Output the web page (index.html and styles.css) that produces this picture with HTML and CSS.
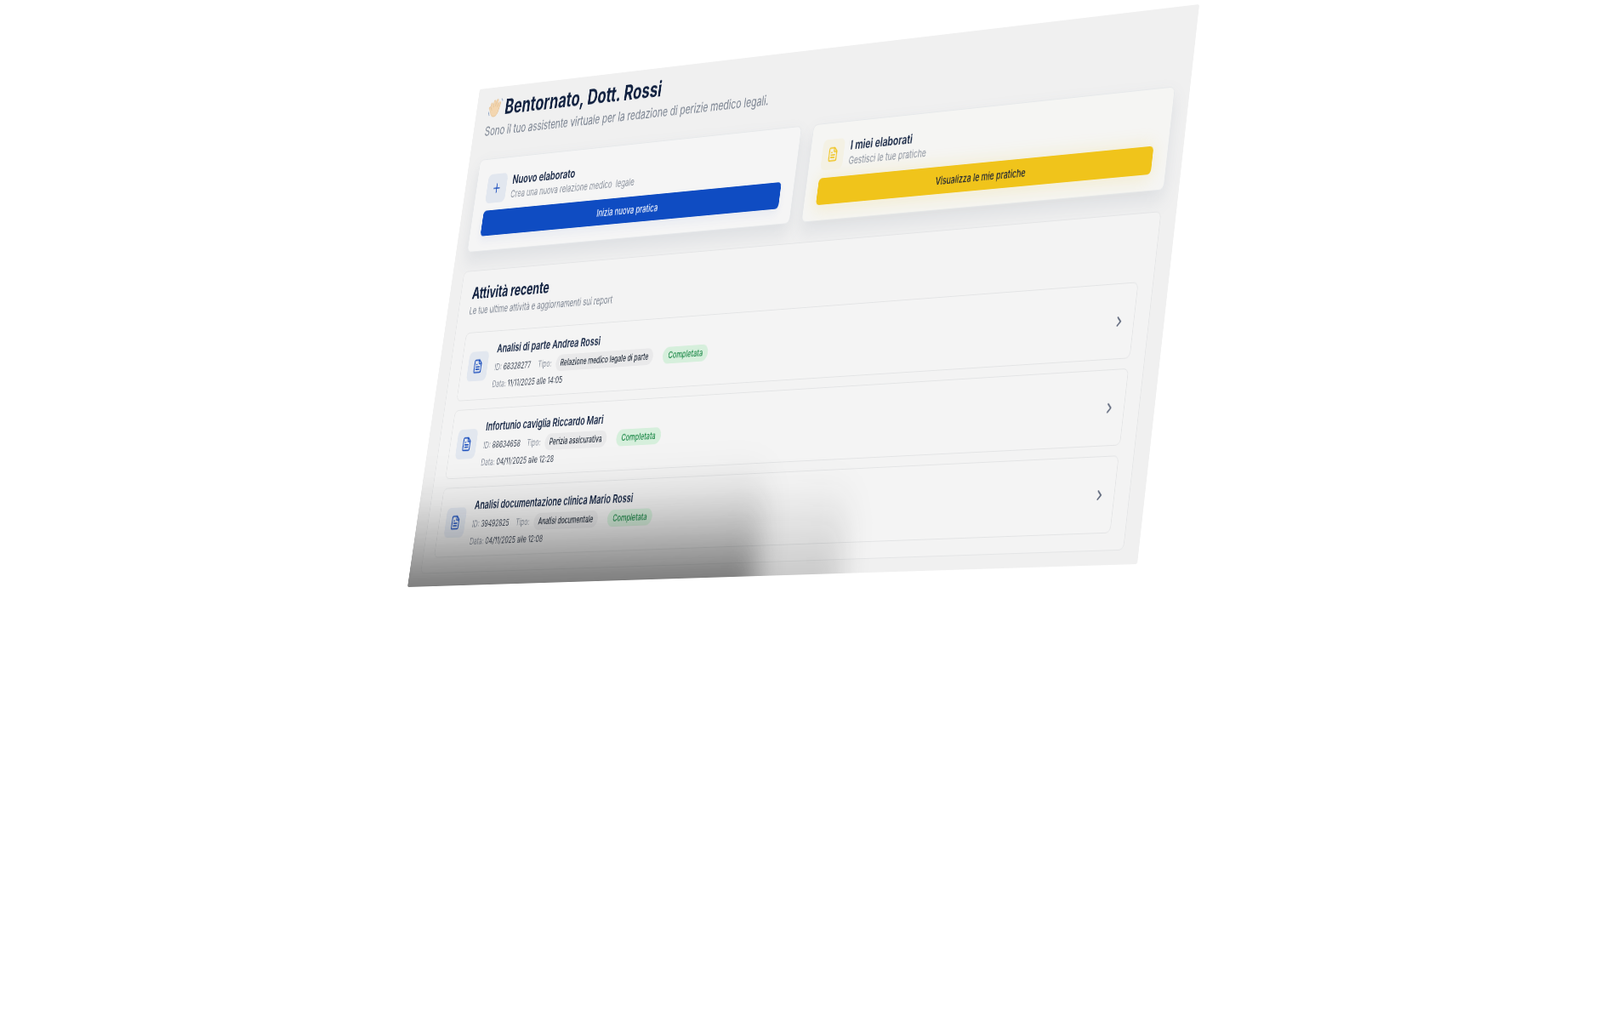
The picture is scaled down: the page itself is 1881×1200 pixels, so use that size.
FILE: index.html
```html
<!DOCTYPE html>
<html lang="it">
<head>
<meta charset="utf-8">
<title>Dashboard</title>
<link rel="stylesheet" href="styles.css">
</head>
<body>
<main class="canvas">
  <header class="hero">
    <h1 class="hero-title">
      <svg class="wave" viewBox="0 0 32 32" aria-hidden="true">
        <g fill="#f3d6b0" stroke="#e2bd8d" stroke-width=".8">
          <path d="M9 19 6 11a1.8 1.8 0 0 1 3.4-1.2L12 15l-.6-8a1.9 1.9 0 0 1 3.8-.2l.9 7 .8-8a1.9 1.9 0 0 1 3.8.3l-.7 8.6 2.2-5.6a1.8 1.8 0 0 1 3.4 1.2l-2.6 9.2c-1 4.7-3.600 8.500-8.400 8.500-3.600 0-6.300-2.200-7.500-5.600l-3.800-6.300a1.700 1.700 0 0 1 2.800-1.900Z"/>
        </g>
        <path d="M3 21c.3 2 1 3.400 2 4.600M27 4c1 .6 1.800 1.500 2.200 2.800" fill="none" stroke="#8ea3c2" stroke-width="1.300" stroke-linecap="round"/>
      </svg>
      Bentornato, Dott. Rossi
    </h1>
    <p class="hero-sub">Sono il tuo assistente virtuale per la redazione di perizie medico legali.</p>
  </header>

  <section class="cards">
    <article class="card">
      <div class="card-head">
        <span class="icon-box icon-box-blue">
          <svg class="icon" viewBox="0 0 24 24"><path d="M5 12h14M12 5v14"/></svg>
        </span>
        <div>
          <h2 class="card-title">Nuovo elaborato</h2>
          <p class="card-sub">Crea una nuova relazione medico&nbsp; legale</p>
        </div>
      </div>
      <button class="btn btn-blue">Inizia nuova pratica</button>
    </article>
    <article class="card card-warm">
      <div class="card-head">
        <span class="icon-box icon-box-yellow">
          <svg class="icon" viewBox="0 0 24 24"><path d="M15 2H6a2 2 0 0 0-2 2v16a2 2 0 0 0 2 2h12a2 2 0 0 0 2-2V7Z"/><path d="M14 2v4a2 2 0 0 0 2 2h4M10 9H8M16 13H8M16 17H8"/></svg>
        </span>
        <div>
          <h2 class="card-title">I miei elaborati</h2>
          <p class="card-sub">Gestisci le tue pratiche</p>
        </div>
      </div>
      <button class="btn btn-yellow">Visualizza le mie pratiche</button>
    </article>
  </section>

  <section class="panel">
    <h2 class="panel-title">Attività recente</h2>
    <p class="panel-sub">Le tue ultime attività e aggiornamenti sui report</p>
    <ul class="rows">
      <li class="row">
        <span class="icon-box icon-box-blue">
          <svg class="icon" viewBox="0 0 24 24"><path d="M15 2H6a2 2 0 0 0-2 2v16a2 2 0 0 0 2 2h12a2 2 0 0 0 2-2V7Z"/><path d="M14 2v4a2 2 0 0 0 2 2h4M10 9H8M16 13H8M16 17H8"/></svg>
        </span>
        <div class="row-body">
          <h3 class="row-title">Analisi di parte Andrea Rossi</h3>
          <div class="meta"><span class="meta-id"><i>ID:</i> 68328277</span><span class="meta-label">Tipo:</span><span class="pill">Relazione medico legale di parte</span><span class="badge">Completata</span></div>
          <p class="date"><i>Data:</i> 11/11/2025 alle 14:05</p>
        </div>
        <svg class="chevron" viewBox="0 0 24 24"><path d="m9 18 6-6-6-6"/></svg>
      </li>
      <li class="row">
        <span class="icon-box icon-box-blue">
          <svg class="icon" viewBox="0 0 24 24"><path d="M15 2H6a2 2 0 0 0-2 2v16a2 2 0 0 0 2 2h12a2 2 0 0 0 2-2V7Z"/><path d="M14 2v4a2 2 0 0 0 2 2h4M10 9H8M16 13H8M16 17H8"/></svg>
        </span>
        <div class="row-body">
          <h3 class="row-title">Infortunio caviglia Riccardo Mari</h3>
          <div class="meta"><span class="meta-id"><i>ID:</i> 88634658</span><span class="meta-label">Tipo:</span><span class="pill">Perizia assicurativa</span><span class="badge">Completata</span></div>
          <p class="date"><i>Data:</i> 04/11/2025 alle 12:28</p>
        </div>
        <svg class="chevron" viewBox="0 0 24 24"><path d="m9 18 6-6-6-6"/></svg>
      </li>
      <li class="row">
        <span class="icon-box icon-box-blue">
          <svg class="icon" viewBox="0 0 24 24"><path d="M15 2H6a2 2 0 0 0-2 2v16a2 2 0 0 0 2 2h12a2 2 0 0 0 2-2V7Z"/><path d="M14 2v4a2 2 0 0 0 2 2h4M10 9H8M16 13H8M16 17H8"/></svg>
        </span>
        <div class="row-body">
          <h3 class="row-title">Analisi documentazione clinica Mario Rossi</h3>
          <div class="meta"><span class="meta-id"><i>ID:</i> 39492825</span><span class="meta-label">Tipo:</span><span class="pill">Analisi documentale</span><span class="badge">Completata</span></div>
          <p class="date"><i>Data:</i> 04/11/2025 alle 12:08</p>
        </div>
        <svg class="chevron" viewBox="0 0 24 24"><path d="m9 18 6-6-6-6"/></svg>
      </li>
    </ul>
  </section>

  <div class="shade shade-wide"></div>
  <div class="shade shade-dark"></div>
</main>
</body>
</html>
```
FILE: styles.css
```css
* { box-sizing: border-box; }

html, body {
  margin: 0;
  height: 100%;
  background: #fff;
  overflow: hidden;
}

.canvas {
  position: absolute;
  left: 0;
  top: 0;
  width: 1340px;
  height: 680px;
  display: flex;
  flex-direction: column;
  padding: 12px 25px 19px 23px;
  overflow: hidden;
  background: #f0f0f0;
  border-radius: 3px;
  font-family: Inter, "Liberation Sans", sans-serif;
  transform-origin: 0 0;
  transform: matrix3d(.51359, -.075045, 0, -.00008351,
                      -.141559, .836441, 0, -.00003457,
                      0, 0, 1, 0,
                      564, 105, 0, 1);
  filter: blur(.7px);
}

.hero { height: 59px; padding: 1px 0 0 1px; }

.hero-title {
  display: flex;
  align-items: center;
  gap: 4px;
  margin: 0;
  font-size: 28px;
  line-height: 32px;
  font-weight: 700;
  letter-spacing: .15px;
  color: #10203f;
}

.wave { width: 32px; height: 32px; flex: none; margin-left: -1px; }

.hero-sub {
  margin: 6px 0 0;
  font-size: 17px;
  line-height: 20px;
  color: #78818f;
}

.cards {
  display: grid;
  grid-template-columns: 1fr 1fr;
  gap: 22px;
  height: 126px;
  margin-top: 29px;
}

.card {
  padding: 21px 24px 20px 22px;
  background: #f5f5f5;
  border: 1px solid #e6e8ea;
  border-radius: 8px;
  box-shadow: 0 12px 24px rgba(100, 116, 139, .13);
}

.card-warm { background: #f5f5f3; }

.card-head {
  display: flex;
  align-items: center;
  gap: 11px;
  height: 40px;
  margin-bottom: 10px;
}

.icon-box {
  display: flex;
  align-items: center;
  justify-content: center;
  width: 40px;
  height: 40px;
  flex: none;
  border-radius: 8px;
}

.icon-box-blue { background: #e2e7ef; color: #1c4fbd; }
.icon-box-yellow { background: #f4f1e4; color: #efc420; }

.icon {
  width: 20px;
  height: 20px;
  fill: none;
  stroke: currentColor;
  stroke-width: 2;
  stroke-linecap: round;
  stroke-linejoin: round;
}

.card-title {
  margin: 0;
  font-size: 16px;
  line-height: 20px;
  font-weight: 600;
  color: #10203f;
}

.card-sub {
  margin: 0;
  font-size: 13px;
  line-height: 20px;
  color: #8a919d;
}

.btn {
  display: block;
  width: 100%;
  height: 35px;
  border: 0;
  border-radius: 6px;
  font-family: inherit;
  font-size: 13px;
  font-weight: 500;
}

.btn-blue {
  background: #0f4cc2;
  color: #e9eefb;
  box-shadow: 0 6px 14px rgba(15, 76, 194, .06);
}

.btn-yellow {
  background: #f0c41b;
  color: #1c2233;
  box-shadow: 0 2px 26px rgba(240, 196, 27, .2);
}

.panel {
  flex: 1;
  margin-top: 28px;
  padding: 17px 24px 20px 22px;
  background: #f3f3f3;
  border: 1px solid #e4e5e6;
  border-radius: 8px;
}

.panel-title {
  margin: 0;
  font-size: 21px;
  line-height: 28px;
  font-weight: 700;
  color: #10203f;
  padding-left: 1px;
}

.panel-sub {
  margin: 0 0 21px;
  font-size: 13px;
  line-height: 18px;
  color: #7d8592;
}

.rows {
  display: flex;
  flex-direction: column;
  gap: 12px;
  margin: 0;
  padding: 0;
  list-style: none;
}

.row {
  display: flex;
  align-items: center;
  gap: 15px;
  height: 93px;
  padding: 1px 14px 0 13px;
  background: #f4f4f4;
  border: 1px solid #e3e4e5;
  border-radius: 8px;
}

.row-body { flex: 1; padding-top: 1px; }

.row-title {
  margin: 0;
  font-size: 15px;
  line-height: 20px;
  font-weight: 600;
  color: #10203f;
}

.meta {
  display: flex;
  align-items: center;
  height: 24px;
  margin-top: 3px;
  font-size: 11.500px;
  color: #3c4554;
}

.meta-id { width: 88px; }

.meta i, .date i, .meta-label { font-style: normal; color: #8a919d; }

.meta-label { width: 36px; }

.pill {
  padding: 3px 9px;
  margin-right: 19px;
  background: #e9e9ea;
  border-radius: 999px;
  font-size: 11.200px;
  line-height: 16px;
  font-weight: 500;
  color: #1f2937;
}

.badge {
  padding: 3px 10px;
  background: #d6efdc;
  border-radius: 999px;
  font-size: 12px;
  line-height: 16px;
  font-weight: 500;
  color: #1f8a4a;
}

.date {
  margin: 3px 0 0;
  font-size: 11.500px;
  line-height: 16px;
  color: #3c4554;
}

.chevron {
  width: 20px;
  height: 20px;
  flex: none;
  fill: none;
  stroke: #5b6478;
  stroke-width: 2.400;
  stroke-linecap: round;
  stroke-linejoin: round;
}

.shade {
  position: absolute;
  left: -60px;
  pointer-events: none;
  border-radius: 0 60px 0 0;
}

.shade-dark {
  bottom: -50px;
  width: 740px;
  height: 195px;
  background: linear-gradient(to top, rgba(30, 30, 30, .6), rgba(30, 30, 30, .48) 22%, rgba(30, 30, 30, .17) 60%, rgba(30, 30, 30, 0));
  filter: blur(24px);
}

.shade-wide {
  bottom: -50px;
  width: 895px;
  height: 170px;
  background: linear-gradient(to top, rgba(30, 30, 30, .24), rgba(30, 30, 30, .13) 50%, rgba(30, 30, 30, 0));
  filter: blur(24px);
}
```
